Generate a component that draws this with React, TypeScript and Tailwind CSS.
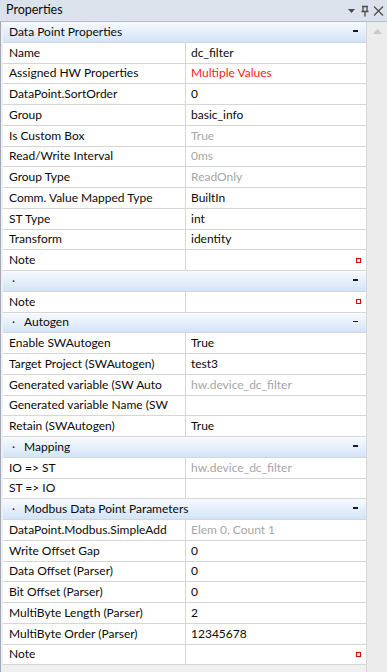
type Row =
  | { kind: "section"; label: string; bullet?: boolean }
  | { kind: "prop"; label: string; value?: string; tone?: "gray" | "red"; note?: boolean };

const rows: Row[] = [
  { kind: "section", label: "Data Point Properties" },
  { kind: "prop", label: "Name", value: "dc_filter" },
  { kind: "prop", label: "Assigned HW Properties", value: "Multiple Values", tone: "red" },
  { kind: "prop", label: "DataPoint.SortOrder", value: "0" },
  { kind: "prop", label: "Group", value: "basic_info" },
  { kind: "prop", label: "Is Custom Box", value: "True", tone: "gray" },
  { kind: "prop", label: "Read/Write Interval", value: "0ms", tone: "gray" },
  { kind: "prop", label: "Group Type", value: "ReadOnly", tone: "gray" },
  { kind: "prop", label: "Comm. Value Mapped Type", value: "BuiltIn" },
  { kind: "prop", label: "ST Type", value: "int" },
  { kind: "prop", label: "Transform", value: "identity" },
  { kind: "prop", label: "Note", note: true },
  { kind: "section", label: "", bullet: true },
  { kind: "prop", label: "Note", note: true },
  { kind: "section", label: "Autogen", bullet: true },
  { kind: "prop", label: "Enable SWAutogen", value: "True" },
  { kind: "prop", label: "Target Project (SWAutogen)", value: "test3" },
  { kind: "prop", label: "Generated variable (SW Auto", value: "hw.device_dc_filter", tone: "gray" },
  { kind: "prop", label: "Generated variable Name (SW" },
  { kind: "prop", label: "Retain (SWAutogen)", value: "True" },
  { kind: "section", label: "Mapping", bullet: true },
  { kind: "prop", label: "IO => ST", value: "hw.device_dc_filter", tone: "gray" },
  { kind: "prop", label: "ST => IO" },
  { kind: "section", label: "Modbus Data Point Parameters", bullet: true },
  { kind: "prop", label: "DataPoint.Modbus.SimpleAdd", value: "Elem 0, Count 1", tone: "gray" },
  { kind: "prop", label: "Write Offset Gap", value: "0" },
  { kind: "prop", label: "Data Offset (Parser)", value: "0" },
  { kind: "prop", label: "Bit Offset (Parser)", value: "0" },
  { kind: "prop", label: "MultiByte Length (Parser)", value: "2" },
  { kind: "prop", label: "MultiByte Order (Parser)", value: "12345678" },
  { kind: "prop", label: "Note", note: true },
];

function SectionRow({ label, bullet }: { label: string; bullet?: boolean }) {
  return (
    <div className="flex h-[20.75px] items-center border-b border-[#d6d6d6] bg-gradient-to-b from-[#f7fafe] to-[#d3e4f7] pr-[8px]">
      {bullet ? (
        <>
          <span className="w-[15px] pl-[9px] text-[#333]">·</span>
          <span className="ml-[6px] flex-1">{label}</span>
        </>
      ) : (
        <span className="flex-1 pl-[6px]">{label}</span>
      )}
      <span className="mb-[2px] h-[1.5px] w-[5px] bg-[#1b1b1b]" />
    </div>
  );
}

function PropRow({ label, value, tone, note }: Extract<Row, { kind: "prop" }>) {
  const color = tone === "gray" ? "text-[#a6a6a6]" : tone === "red" ? "text-[#ff1a1a]" : "text-[#0a0a0a]";
  return (
    <div className="flex h-[20.75px] border-b border-[#d6d6d6] bg-white">
      <div className="flex w-[183px] items-center overflow-hidden whitespace-nowrap border-r border-[#d6d6d6] pl-[6px]">
        {label}
      </div>
      <div className={`flex flex-1 items-center overflow-hidden whitespace-nowrap pl-[5px] pr-[5px] ${color}`}>
        <span className="flex-1">{value}</span>
        {note && <span className="h-[5px] w-[5px] border border-[#e00000]" />}
      </div>
    </div>
  );
}

export default function App() {
  return (
    <div
      className="flex h-[672px] w-[387px] flex-col overflow-hidden bg-[#f0f0f0] text-[12px] text-[#0a0a0a]"
      style={{ fontFamily: 'Lato, "Liberation Sans", sans-serif' }}
    >
      <div className="flex h-[22px] shrink-0 items-center border-b border-[#b3bccb] bg-[#dce2eb] pl-[6px] pr-[2px]">
        <span className="flex-1 text-[12.5px]">Properties</span>
        <svg width="38" height="12" viewBox="0 0 38 12" className="text-[#4a4a4a]">
          <path d="M1 4h7l-3.5 4z" fill="currentColor" />
          <path d="M15 1.5h6M16 1.5v5M20 1.5v5M14.5 6.5h7M18 6.5v5" stroke="currentColor" strokeWidth="1.3" fill="none" />
          <path d="M27 1.5l9 9M36 1.5l-9 9" stroke="currentColor" strokeWidth="1.2" />
        </svg>
      </div>
      <div className="flex min-h-0 flex-1">
        <div className="w-[1px] bg-[#9ea9ba]" />
        <div className="w-[366px] border-r border-[#d6d6d6] pl-[2px]">
          {rows.map((r, i) =>
            r.kind === "section" ? (
              <SectionRow key={i} label={r.label} bullet={r.bullet} />
            ) : (
              <PropRow key={i} {...r} />
            )
          )}
        </div>
        <div className="flex flex-1 justify-center bg-[#ececec] pt-[7px]">
          <svg width="9" height="5" viewBox="0 0 9 5">
            <path d="M0 5L4.5 0 9 5z" fill="#c9c9c9" />
          </svg>
        </div>
      </div>
    </div>
  );
}
